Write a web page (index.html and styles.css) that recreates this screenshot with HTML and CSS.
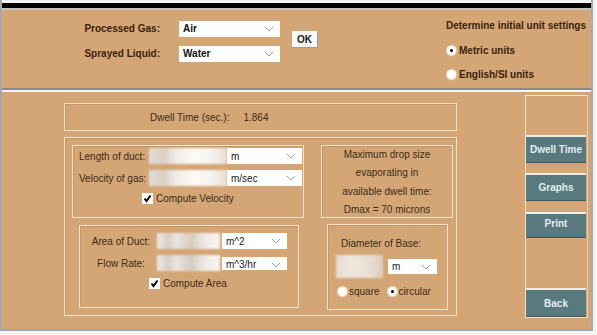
FILE: index.html
```html
<!DOCTYPE html>
<html lang="en">
<head>
  <meta charset="UTF-8">
  <title>Dwell Time Calculator</title>
  <link rel="stylesheet" href="styles.css">
</head>
<body>
  <div class="window">
    <div class="titlebar"></div>

    <!-- Gas / liquid selection and units -->
    <div class="top-panel">
      <div class="top-labels">
        <div class="top-row">Processed Gas:</div>
        <div class="top-row">Sprayed Liquid:</div>
      </div>
      <div class="top-combos">
        <div class="combo combo-bold top-row"><span>Air</span><svg class="chev" width="10" height="6" viewBox="0 0 10 6"><polyline points="1,1 5,5 9,1" fill="none" stroke="#9a9a9a" stroke-width="1"/></svg></div>
        <div class="combo combo-bold top-row"><span>Water</span><svg class="chev" width="10" height="6" viewBox="0 0 10 6"><polyline points="1,1 5,5 9,1" fill="none" stroke="#9a9a9a" stroke-width="1"/></svg></div>
      </div>
      <button class="ok-btn">OK</button>
      <div class="units">
        <div class="units-title">Determine initial unit settings</div>
        <div class="radio-row"><span class="radio checked"></span>Metric units</div>
        <div class="radio-row"><span class="radio"></span>English/SI units</div>
      </div>
    </div>

    <!-- Calculation panel -->
    <div class="main-panel">
      <div class="left-col">
        <div class="dwell-box">
          <span>Dwell Time (sec.):</span>
          <span class="dwell-value">1.864</span>
        </div>
        <div class="outer-box">
          <div class="sub-col wide">
            <div class="box velocity-box">
              <div class="field-row">
                <span class="field-label">Length of duct:</span>
                <div class="blur-field"></div>
                <div class="combo combo-unit"><span>m</span><svg class="chev" width="10" height="6" viewBox="0 0 10 6"><polyline points="1,1 5,5 9,1" fill="none" stroke="#9a9a9a" stroke-width="1"/></svg></div>
              </div>
              <div class="field-row">
                <span class="field-label">Velocity of gas:</span>
                <div class="blur-field"></div>
                <div class="combo combo-unit"><span>m/sec</span><svg class="chev" width="10" height="6" viewBox="0 0 10 6"><polyline points="1,1 5,5 9,1" fill="none" stroke="#9a9a9a" stroke-width="1"/></svg></div>
              </div>
              <div class="check-row velocity-check">
                <span class="checkbox"><svg width="9" height="9" viewBox="0 0 9 9"><polyline points="1.5,4.5 3.5,7 7.5,1.5" fill="none" stroke="#000" stroke-width="2"/></svg></span>
                Compute Velocity
              </div>
            </div>
            <div class="box area-box">
              <div class="field-row">
                <span class="field-label centered">Area of Duct:</span>
                <div class="blur-field short"></div>
                <div class="combo combo-area"><span>m^2</span><svg class="chev" width="10" height="6" viewBox="0 0 10 6"><polyline points="1,1 5,5 9,1" fill="none" stroke="#9a9a9a" stroke-width="1"/></svg></div>
              </div>
              <div class="field-row">
                <span class="field-label centered">Flow Rate:</span>
                <div class="blur-field short"></div>
                <div class="combo combo-area clipped"><span>m^3/hr</span><svg class="chev" width="10" height="6" viewBox="0 0 10 6"><polyline points="1,1 5,5 9,1" fill="none" stroke="#9a9a9a" stroke-width="1"/></svg></div>
              </div>
              <div class="check-row area-check">
                <span class="checkbox"><svg width="9" height="9" viewBox="0 0 9 9"><polyline points="1.5,4.5 3.5,7 7.5,1.5" fill="none" stroke="#000" stroke-width="2"/></svg></span>
                Compute Area
              </div>
            </div>
          </div>
          <div class="sub-col narrow">
            <div class="box dmax-box">
              <div>Maximum drop size</div>
              <div>evaporating in</div>
              <div>available dwell time:</div>
              <div>Dmax = 70 microns</div>
            </div>
            <div class="box base-box">
              <div class="base-title">Diameter of Base:</div>
              <div class="base-row">
                <div class="blur-field base-field"></div>
                <div class="combo combo-base"><span>m</span><svg class="chev" width="10" height="6" viewBox="0 0 10 6"><polyline points="1,1 5,5 9,1" fill="none" stroke="#9a9a9a" stroke-width="1"/></svg></div>
              </div>
              <div class="base-radios">
                <span class="radio"></span><span class="radio-text">square</span>
                <span class="radio checked second"></span><span class="radio-text">circular</span>
              </div>
            </div>
          </div>
        </div>
      </div>

      <div class="side-col">
        <button class="side-btn first">Dwell Time</button>
        <button class="side-btn">Graphs</button>
        <button class="side-btn print">Print</button>
        <button class="side-btn back">Back</button>
      </div>
    </div>
  </div>
</body>
</html>
```

FILE: styles.css
```css
/* Base */
body {
  margin: 0;
  background-color: #f3f3f3;
  font-family: "Liberation Sans", Arial, sans-serif;
  font-size: 10px;
  color: #3b2a1b;
}
.window {
  width: 593px;
  box-sizing: border-box;
  border-left: 2px solid #a9a9a9;
  border-right: 2px solid #a9a9a9;
  padding-top: 3px;
  background-color: #f3f3f3;
}
.titlebar {
  height: 5px;
  background-color: #000;
}

/* Top panel */
.top-panel {
  display: flex;
  align-items: flex-start;
  height: 82px;
  box-sizing: border-box;
  padding-top: 11px;
  background-color: #d4a675;
  border-top: 2px solid #c6c2bd;
  border-bottom: 2px solid #8e8a86;
}
.top-labels {
  width: 158px;
  text-align: right;
  font-weight: bold;
  color: #3a2210;
}
.top-row {
  height: 16px;
  line-height: 16px;
  margin-bottom: 9px;
}
.top-combos {
  margin-left: 19px;
  width: 101px;
}
.combo {
  display: flex;
  align-items: center;
  justify-content: space-between;
  box-sizing: border-box;
  background-color: #fff;
  padding: 0 6px 0 4px;
  color: #1a1a1a;
  height: 16px;
  overflow: hidden;
}
.combo-bold {
  font-weight: bold;
  color: #111;
}
.chev {
  flex-shrink: 0;
}
.ok-btn {
  margin-left: 12px;
  margin-top: 10px;
  width: 26px;
  height: 17px;
  padding: 0;
  border: none;
  border-right: 1px solid #9c9c9c;
  border-bottom: 1px solid #9c9c9c;
  background-color: #f7f7f7;
  font-family: "Liberation Sans", Arial, sans-serif;
  font-size: 10px;
  font-weight: bold;
  color: #1a1a1a;
}
.units {
  margin-left: 128px;
  margin-top: -1px;
  font-weight: bold;
  color: #3a2210;
}
.units-title {
  line-height: 12px;
  height: 12px;
  margin-bottom: 6px;
}
.radio-row {
  display: flex;
  align-items: center;
  height: 24px;
  padding-left: 1px;
}
.radio {
  display: inline-block;
  width: 9px;
  height: 9px;
  border-radius: 50%;
  background-color: #fff;
  box-shadow: 0 0 1px 1px rgba(255,255,255,0.6);
  position: relative;
  margin-right: 3px;
  flex-shrink: 0;
}
.radio.checked::after {
  content: "";
  position: absolute;
  left: 3px;
  top: 3px;
  width: 3px;
  height: 3px;
  border-radius: 50%;
  background-color: #000;
}

/* Main panel */
.main-panel {
  display: flex;
  height: 241px;
  box-sizing: border-box;
  padding: 3px 0 0 62px;
  background-color: #d4a675;
  border-top: 2px solid #f4f4f4;
  border-bottom: 2px solid #a9a9a9;
}
.left-col {
  width: 393px;
  margin-top: 8px;
}
.box, .dwell-box, .outer-box, .side-col {
  box-sizing: border-box;
  border: 1px solid #f4e2c4;
  box-shadow: inset 1px 1px 0 #c39869;
}
.dwell-box {
  height: 28px;
  display: flex;
  align-items: center;
  padding-left: 85px;
  gap: 14px;
}
.outer-box {
  margin-top: 6px;
  height: 179px;
  display: flex;
  gap: 17px;
  padding: 7px 0 0 7px;
}
.sub-col.wide {
  width: 232px;
}
.sub-col.narrow {
  width: 132px;
}

/* Velocity box */
.velocity-box {
  height: 73px;
  padding: 2px 0 0 6px;
}
.field-row {
  display: flex;
  align-items: center;
  height: 16px;
  margin-bottom: 6px;
}
.field-label {
  width: 70px;
  white-space: nowrap;
}
.field-label.centered {
  width: 72px;
  text-align: center;
}
.blur-field {
  width: 78px;
  height: 16px;
  background: linear-gradient(90deg, #e2dbd4 0%, #d9d0c8 20%, #f1ede9 35%, #fbfaf8 60%, #f6f3f0 80%, #e8dfd6 100%);
  filter: blur(1px);
}
.blur-field.short {
  width: 63px;
  background: linear-gradient(90deg, #eee9e4 0%, #d8cec5 18%, #ebe5df 30%, #d6ccc2 55%, #efe9e3 75%, #f8f5f2 100%);
}
.combo-unit {
  width: 75px;
}
.check-row {
  display: flex;
  align-items: center;
  height: 12px;
}
.checkbox {
  width: 11px;
  height: 11px;
  background-color: #fff;
  display: inline-flex;
  align-items: center;
  justify-content: center;
  margin-right: 3px;
}
.velocity-check {
  margin-top: 5px;
  margin-left: 63px;
}

/* Area box */
.area-box {
  margin-top: 7px;
  margin-left: 7px;
  width: 220px;
  height: 83px;
  padding: 7px 0 0 5px;
}
.combo-area {
  width: 65px;
  margin-left: 2px;
}
.combo.clipped {
  height: 13px;
  align-items: flex-start;
  line-height: 16px;
}
.combo.clipped .chev {
  margin-top: 5px;
}
.area-check {
  margin-top: 6px;
  margin-left: 64px;
}

/* Dmax box */
.dmax-box {
  height: 73px;
  text-align: center;
  line-height: 18.3px;
}

/* Diameter box */
.base-box {
  margin-top: 6px;
  margin-left: 6px;
  width: 121px;
  height: 86px;
  padding-top: 13px;
}
.base-title {
  line-height: 12px;
  padding-left: 13px;
}
.base-row {
  display: flex;
  align-items: center;
  margin-top: 5px;
  padding-left: 8px;
}
.blur-field.base-field {
  width: 47px;
  height: 23px;
  background: linear-gradient(90deg, #e6dbcf 0%, #efe7de 30%, #e9dfd4 70%, #dccdbd 100%);
}
.combo-base {
  width: 49px;
  height: 15px;
  margin-left: 5px;
}
.base-radios {
  display: flex;
  align-items: center;
  height: 12px;
  margin-top: 7px;
  padding-left: 10px;
}
.base-radios .radio {
  margin-right: 2px;
}
.base-radios .radio.second {
  margin-left: 8px;
}

/* Side buttons */
.side-col {
  width: 63px;
  height: 223px;
  margin-left: 68px;
  display: flex;
  flex-direction: column;
  box-shadow: none;
  border-right-color: #e9d6b6;
}
.side-btn {
  width: 60px;
  height: 28px;
  padding: 0;
  border: none;
  border-top: 2px solid #f1ece1;
  border-bottom: 1px solid #40585b;
  background-color: #587a7f;
  color: #e4edef;
  font-family: "Liberation Sans", Arial, sans-serif;
  font-size: 10px;
  font-weight: bold;
  margin-top: 10px;
}
.side-btn.first {
  margin-top: 39px;
}
.side-btn.print {
  height: 26px;
  margin-top: 11px;
  padding-bottom: 4px;
}
.side-btn.back {
  height: 29px;
  margin-top: auto;
}
```
